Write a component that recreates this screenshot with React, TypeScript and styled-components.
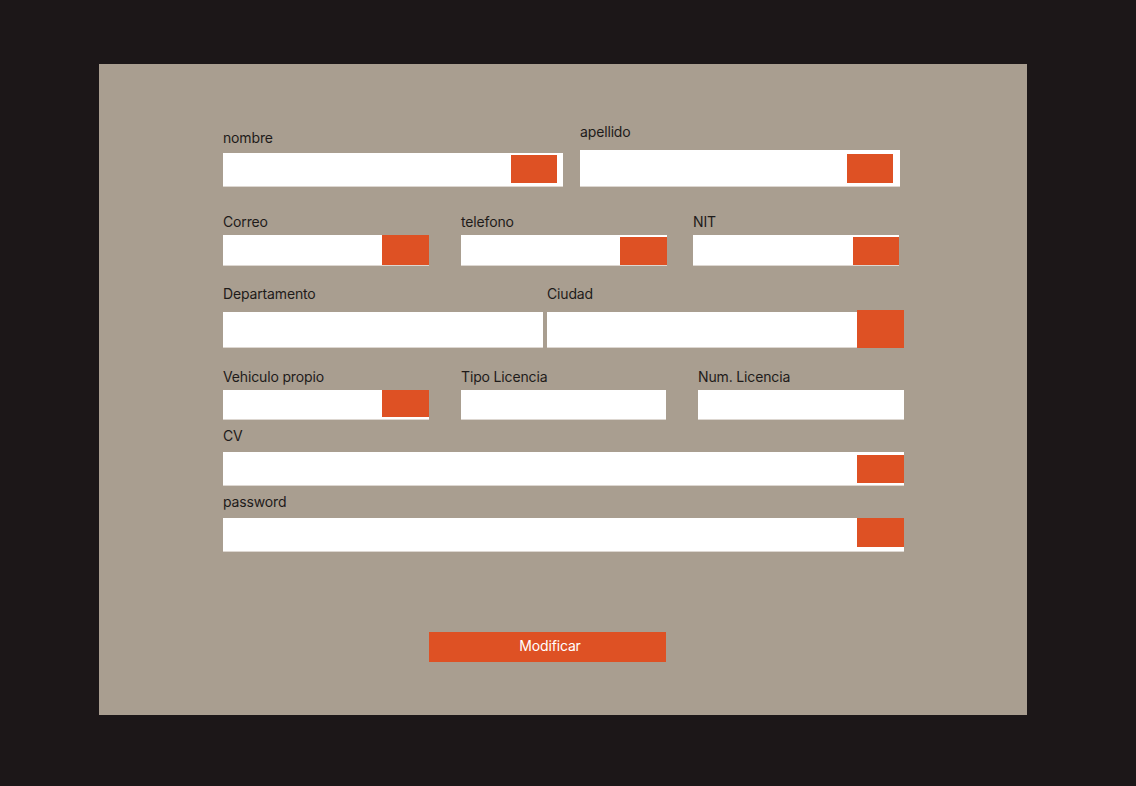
import React from 'react'
import styled, { createGlobalStyle } from 'styled-components'

const GlobalStyle = createGlobalStyle`
  html, body {
    margin: 0;
    padding: 0;
    background: #1c1718;
  }
  * {
    box-sizing: border-box;
  }
`

const Page = styled.div`
  min-height: 100vh;
  padding: 64px 0 0 99px;
  font-family: Inter, 'Liberation Sans', sans-serif;
`

const Panel = styled.form`
  width: 928px;
  height: 651px;
  background: #a99e90;
  padding: 40px 0 0 124px;
  display: flex;
  flex-direction: column;
`

const Row = styled.div<{ $h: number }>`
  display: flex;
  align-items: flex-end;
  height: ${(p) => p.$h}px;
`

const Field = styled.div<{ $ml?: number }>`
  display: flex;
  flex-direction: column;
  margin-left: ${(p) => p.$ml || 0}px;
`

const Label = styled.label<{ $gap: number }>`
  font-size: 14px;
  line-height: 17px;
  letter-spacing: -0.15px;
  color: #1e1b1a;
  margin-bottom: ${(p) => p.$gap}px;
  white-space: nowrap;
`

const InputBox = styled.div<{ $w: number; $h: number; $pt?: number; $pr?: number }>`
  width: ${(p) => p.$w}px;
  height: ${(p) => p.$h}px;
  background: #ffffff;
  border-bottom: 1px solid #ddd7d1;
  display: flex;
  justify-content: flex-end;
  align-items: flex-start;
  padding-top: ${(p) => p.$pt || 0}px;
  padding-right: ${(p) => p.$pr || 0}px;
`

const Tag = styled.span<{ $w?: number; $h: number }>`
  display: block;
  width: ${(p) => p.$w || 47}px;
  height: ${(p) => p.$h}px;
  background: #de5124;
`

const Joined = styled.div`
  display: flex;
  align-items: flex-end;
`

const SubmitRow = styled.div`
  display: flex;
  align-items: flex-end;
  height: 110px;
  padding-left: 206px;
`

const Submit = styled.button`
  width: 237px;
  height: 30px;
  border: none;
  background: #de5124;
  color: #ffffff;
  font-family: Inter, 'Liberation Sans', sans-serif;
  font-size: 14px;
  letter-spacing: -0.15px;
  padding: 0 0 3px 5px;
  cursor: pointer;
`

export default function App() {
  return (
    <>
      <GlobalStyle />
      <Page>
        <Panel onSubmit={(e) => e.preventDefault()}>
          <Row $h={83}>
            <Field>
              <Label $gap={7}>nombre</Label>
              <InputBox $w={340} $h={34} $pt={2} $pr={6}>
                <Tag $w={46} $h={28} />
              </InputBox>
            </Field>
            <Field $ml={17}>
              <Label $gap={10}>apellido</Label>
              <InputBox $w={320} $h={37} $pt={4} $pr={7}>
                <Tag $w={46} $h={29} />
              </InputBox>
            </Field>
          </Row>

          <Row $h={79}>
            <Field>
              <Label $gap={5}>Correo</Label>
              <InputBox $w={206} $h={31}>
                <Tag $h={30} />
              </InputBox>
            </Field>
            <Field $ml={32}>
              <Label $gap={5}>telefono</Label>
              <InputBox $w={206} $h={31} $pt={2}>
                <Tag $h={28} />
              </InputBox>
            </Field>
            <Field $ml={26}>
              <Label $gap={5}>NIT</Label>
              <InputBox $w={206} $h={31} $pt={2}>
                <Tag $w={46} $h={28} />
              </InputBox>
            </Field>
          </Row>

          <Row $h={82}>
            <Field>
              <Label $gap={10}>Departamento</Label>
              <InputBox $w={320} $h={36} />
            </Field>
            <Field $ml={4}>
              <Label $gap={8}>Ciudad</Label>
              <Joined>
                <InputBox $w={310} $h={36} />
                <Tag $h={38} />
              </Joined>
            </Field>
          </Row>

          <Row $h={72}>
            <Field>
              <Label $gap={5}>Vehiculo propio</Label>
              <InputBox $w={206} $h={30}>
                <Tag $h={27} />
              </InputBox>
            </Field>
            <Field $ml={32}>
              <Label $gap={5}>Tipo Licencia</Label>
              <InputBox $w={205} $h={30} />
            </Field>
            <Field $ml={32}>
              <Label $gap={5}>Num. Licencia</Label>
              <InputBox $w={206} $h={30} />
            </Field>
          </Row>

          <Row $h={66}>
            <Field>
              <Label $gap={8}>CV</Label>
              <InputBox $w={681} $h={34} $pt={3}>
                <Tag $h={28} />
              </InputBox>
            </Field>
          </Row>

          <Row $h={66}>
            <Field>
              <Label $gap={8}>password</Label>
              <InputBox $w={681} $h={34}>
                <Tag $h={29} />
              </InputBox>
            </Field>
          </Row>

          <SubmitRow>
            <Submit type="submit">Modificar</Submit>
          </SubmitRow>
        </Panel>
      </Page>
    </>
  )
}
